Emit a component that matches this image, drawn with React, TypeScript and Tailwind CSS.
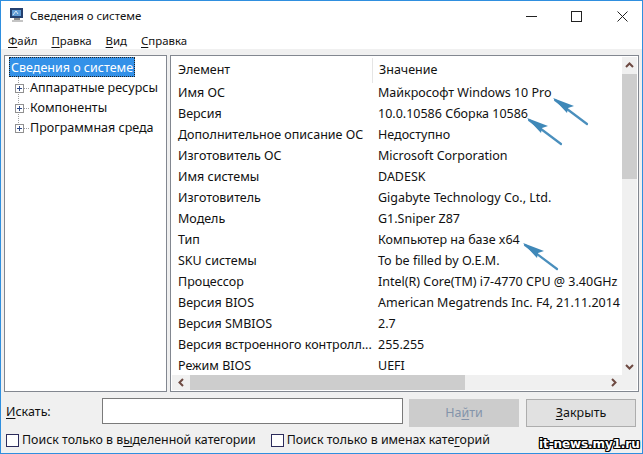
import React from 'react';

const rows = [
  ['Имя ОС', 'Майкрософт Windows 10 Pro'],
  ['Версия', '10.0.10586 Сборка 10586'],
  ['Дополнительное описание ОС', 'Недоступно'],
  ['Изготовитель ОС', 'Microsoft Corporation'],
  ['Имя системы', 'DADESK'],
  ['Изготовитель', 'Gigabyte Technology Co., Ltd.'],
  ['Модель', 'G1.Sniper Z87'],
  ['Тип', 'Компьютер на базе x64'],
  ['SKU системы', 'To be filled by O.E.M.'],
  ['Процессор', 'Intel(R) Core(TM) i7-4770 CPU @ 3.40GHz'],
  ['Версия BIOS', 'American Megatrends Inc. F4, 21.11.2014'],
  ['Версия SMBIOS', '2.7'],
  ['Версия встроенного контролл...', '255.255'],
  ['Режим BIOS', 'UEFI'],
];

const Arrow = ({ className }: { className: string }) => (
  <svg className={`absolute ${className}`} width="36" height="28" viewBox="0 0 36 28" fill="none">
    <path d="M2 2 L34 26" stroke="#4a8fbd" strokeWidth="2.2" strokeLinecap="round" />
    <path d="M0 0 L21 8 L15 10 L14 15 Z" fill="#3f88b8" />
  </svg>
);

const TreeItem = ({ label }: { label: string }) => (
  <div className="flex h-[20px] items-center pt-[2px]">
    <svg className="relative ml-[6px]" width="9" height="9" viewBox="0 0 9 9">
      <rect x="0.5" y="0.5" width="8" height="8" fill="#fff" stroke="#919191" />
      <path d="M2 4.5 H7 M4.5 2 V7" stroke="#2f4a8a" />
    </svg>
    <div className="w-[5px] border-t border-dotted border-[#a0a0a0]" />
    <span className="ml-px">{label}</span>
  </div>
);

const Chevron = ({ d }: { d: string }) => (
  <svg width="9" height="9" viewBox="0 0 9 9" fill="none">
    <path d={d} stroke="#6e4a42" strokeWidth="2" />
  </svg>
);

const U = ({ children }: { children: string }) => <span className="underline underline-offset-2">{children}</span>;

export default function App() {
  return (
    <div className="relative flex h-[454px] w-[643px] flex-col overflow-hidden border border-[#2f8fdf] bg-[#f0f0f0] font-['Noto_Sans',sans-serif] text-[12.5px] text-[#111]">
      {/* title bar */}
      <div className="flex h-[30px] items-center bg-white">
        <svg className="ml-[8px]" width="16" height="16" viewBox="0 0 16 16">
          <rect x="1" y="0" width="13" height="10" fill="#24406f" />
          <rect x="3" y="2" width="9" height="6" fill="#5f9bd4" />
          <path d="M4 7 L7 3 L9 6" stroke="#dce9f5" fill="none" />
          <rect x="5" y="10" width="6" height="2" fill="#8a8a8a" />
          <rect x="3" y="12" width="11" height="2" fill="#c4c4c4" />
        </svg>
        <span className="ml-[5px] text-[11.4px]">Сведения о системе</span>
        <div className="ml-auto flex items-center text-[#222]">
          <svg className="mr-[34px]" width="11" height="11" viewBox="0 0 11 11"><path d="M0 5.5 H11" stroke="currentColor" /></svg>
          <svg className="mr-[35px]" width="11" height="11" viewBox="0 0 11 11" fill="none"><rect x="0.5" y="0.5" width="10" height="10" stroke="currentColor" /></svg>
          <svg className="mr-[14px]" width="11" height="11" viewBox="0 0 11 11" fill="none"><path d="M0.5 0.5 L10.5 10.5 M10.5 0.5 L0.5 10.5" stroke="currentColor" /></svg>
        </div>
      </div>

      {/* menu */}
      <div className="flex h-[18px] items-center gap-[14px] bg-white pl-[7px] pt-[2px] text-[11.4px]">
        <span><U>Ф</U>айл</span>
        <span><U>П</U>равка</span>
        <span><U>В</U>ид</span>
        <span><U>С</U>правка</span>
      </div>

      {/* panels */}
      <div className="mt-[6px] flex h-[337px] gap-[3px] px-[3px]">
        <div className="relative w-[163px] border border-[#828790] bg-white pl-[4px] pt-px">
          <div className="absolute left-[13px] top-[21px] h-[50px] border-l border-dotted border-[#a0a0a0]" />
          <div className="w-fit border border-dotted border-[#222] bg-[#3391e8] px-px pt-px leading-[17px] text-white">
            Сведения о системе
          </div>
          <TreeItem label="Аппаратные ресурсы" />
          <TreeItem label="Компоненты" />
          <TreeItem label="Программная среда" />
        </div>

        <div className="flex flex-1 flex-col border border-[#828790] bg-white p-px">
          <div className="flex min-h-0 flex-1">
            <div className="min-w-0 flex-1 overflow-hidden pt-px">
              <div className="flex h-[25px] items-center">
                <div className="flex h-[25px] w-[201px] items-center border-r border-[#e5e5e5] pl-[6px]">Элемент</div>
                <div className="pl-[6px]">Значение</div>
              </div>
              {rows.map(([k, v]) => (
                <div key={k} className="flex h-[21px] items-center whitespace-nowrap">
                  <div className="w-[201px] pl-[6px]">{k}</div>
                  <div className="pl-[5px]">{v}</div>
                </div>
              ))}
            </div>
            {/* vertical scrollbar */}
            <div className="flex w-[15px] flex-col bg-[#f0f0f0]">
              <div className="flex h-[17px] items-center justify-center"><Chevron d="M1 6 L4.5 2.5 L8 6" /></div>
              <div className="h-[105px] bg-[#cdcdcd]" />
              <div className="flex-1" />
              <div className="flex h-[17px] items-center justify-center"><Chevron d="M1 3 L4.5 6.5 L8 3" /></div>
            </div>
          </div>
          {/* horizontal scrollbar */}
          <div className="flex h-[15px] bg-[#f0f0f0]">
            <div className="flex w-[18px] items-center justify-center"><Chevron d="M6 1 L2.5 4.5 L6 8" /></div>
            <div className="w-[275px] bg-[#cdcdcd]" />
            <div className="flex-1" />
            <div className="flex w-[17px] items-center justify-center"><Chevron d="M3 1 L6.5 4.5 L3 8" /></div>
            <div className="w-[15px]" />
          </div>
        </div>
      </div>

      {/* search row */}
      <div className="mt-[6px] flex h-[29px] items-start pl-[5px]">
        <span className="flex h-[26px] w-[96px] items-center pt-[2px]"><span><U>И</U>скать:</span></span>
        <div className="h-[26px] w-[301px] border border-[#7a7a7a] bg-white" />
        <div className="ml-[6px] mt-px flex h-[28px] w-[110px] items-center justify-center bg-[#cccccc] text-[#8494aa]">
          <span>На<U>й</U>ти</span>
        </div>
        <div className="ml-[7px] mt-px flex h-[28px] w-[110px] items-center justify-center border border-[#adadad] bg-[#e1e1e1]">
          <span><U>З</U>акрыть</span>
        </div>
      </div>

      {/* checkboxes */}
      <div className="mt-[5px] flex h-[16px] items-center pl-[5px] text-[12.4px]">
        <div className="h-[13px] w-[13px] border border-[#2c2c5c] bg-white" />
        <span className="ml-[3px]">Поиск только в в<U>ы</U>деленной категории</span>
        <div className="ml-[15px] h-[13px] w-[13px] border border-[#2c2c5c] bg-white" />
        <span className="ml-[3px]">Поиск только в именах кате<U>г</U>орий</span>
      </div>

      <Arrow className="left-[552px] top-[97px]" />
      <Arrow className="left-[526px] top-[117px]" />
      <Arrow className="left-[522px] top-[242px]" />
      <span className="absolute left-[538px] top-[437px] font-['DejaVu_Sans',sans-serif] text-[12px] font-bold leading-none tracking-[-0.1px] text-white [text-shadow:1px_0_0_#000,-1px_0_0_#000,0_1px_0_#000,0_-1px_0_#000,1px_1px_0_#000,-1px_-1px_0_#000,1px_-1px_0_#000,-1px_1px_0_#000]">
        it-news.my1.ru
      </span>
    </div>
  );
}
